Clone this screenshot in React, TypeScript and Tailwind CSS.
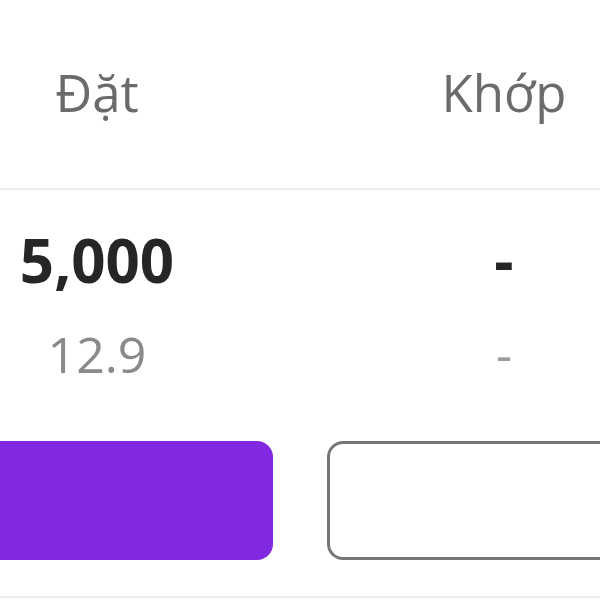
export default function App() {
  return (
    <div className="w-[600px] h-[600px] overflow-hidden bg-white font-['Open_Sans',sans-serif]">
      {/* Header */}
      <div className="grid grid-cols-[194px_1fr_192px] h-[190px] pt-[67px] border-b-2 border-[#ededed]">
        <div className="text-center text-[51px] leading-none text-[#6b6b6b]">Đặt</div>
        <div />
        <div className="text-center text-[51px] leading-none text-[#6b6b6b]">Khớp</div>
      </div>

      {/* Values */}
      <div className="grid grid-cols-[194px_1fr_192px] pt-[40px]">
        <div className="flex flex-col items-center">
          <div className="text-[60px] leading-none font-bold text-[#262626]">5,000</div>
          <div className="mt-[39px] text-[50px] leading-none text-[#8a8a8a]">12.9</div>
        </div>
        <div />
        <div className="flex flex-col items-center">
          <div className="text-[60px] leading-none font-bold text-[#262626]">-</div>
          <div className="mt-[39px] text-[50px] leading-none text-[#9a9a9a]">-</div>
        </div>
      </div>

      {/* Buttons */}
      <div className="flex gap-[54px] mt-[62px] h-[119px]">
        <button className="shrink-0 -ml-[24px] w-[297px] h-full rounded-[16px] bg-[#8029e0]" />
        <button className="shrink-0 w-[300px] h-full rounded-[16px] border-[3px] border-[#767676] bg-white" />
      </div>

      <div className="mt-[36px] h-[2px] bg-[#ededed]" />
    </div>
  );
}
